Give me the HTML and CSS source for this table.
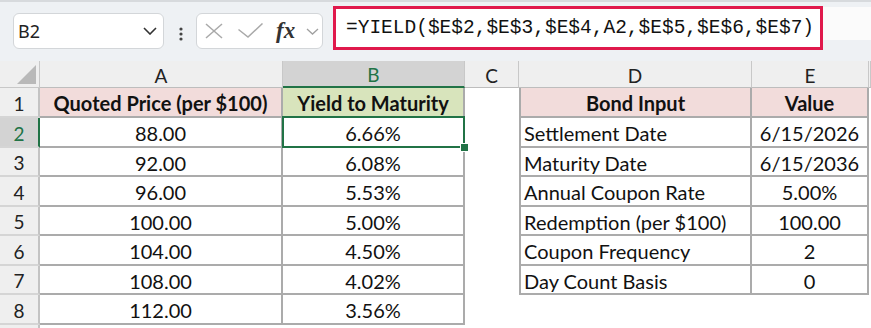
FILE: index.html
```html
<!DOCTYPE html>
<html>
<head>
<meta charset="utf-8">
<link rel="stylesheet" href="styles.css">
</head>
<body>
<div class="app">
  <div class="toolbar">
    <div class="namebox">
      <span class="nb-text">B2</span>
      <svg class="nb-chev" width="14" height="8" viewBox="0 0 14 8"><polyline points="1,1 7,7 13,1" fill="none" stroke="#333" stroke-width="1.6"/></svg>
    </div>
    <svg class="dots" width="4" height="14" viewBox="0 0 4 14"><circle cx="2" cy="2" r="1.6" fill="#444"/><circle cx="2" cy="7" r="1.6" fill="#444"/><circle cx="2" cy="12" r="1.6" fill="#444"/></svg>
    <div class="fnbox">
      <svg class="ic-x" width="18" height="16" viewBox="0 0 18 16"><line x1="1" y1="1" x2="17" y2="15" stroke="#a9a9a9" stroke-width="1.5"/><line x1="17" y1="1" x2="1" y2="15" stroke="#a9a9a9" stroke-width="1.5"/></svg>
      <svg class="ic-check" width="25" height="15" viewBox="0 0 25 15"><polyline points="0.5,6.5 10,14 24.5,0.5" fill="none" stroke="#a9a9a9" stroke-width="1.5"/></svg>
      <span class="fx">fx</span>
      <svg class="ic-chev" width="13" height="7" viewBox="0 0 13 7"><polyline points="1,1 6.5,6 12,1" fill="none" stroke="#a0a0a0" stroke-width="1.3"/></svg>
    </div>
    <div class="formula">=YIELD($E$2,$E$3,$E$4,A2,$E$5,$E$6,$E$7)</div>
    <div class="fbar-rest"></div>
  </div>

  <div class="sheet">
    <div class="corner"><svg width="19" height="19" viewBox="0 0 19 19"><polygon points="19,0 19,19 0,19" fill="#b9b9b9"/></svg></div>
    <div class="ch">A</div>
    <div class="ch sel">B</div>
    <div class="ch">C</div>
    <div class="ch">D</div>
    <div class="ch">E</div>
    <div class="ch"></div>

    <div class="rh">1</div>
    <div class="c t pink b">Quoted Price (per $100)</div>
    <div class="c t green b">Yield to Maturity</div>
    <div class="c"></div>
    <div class="c t tl pink b">Bond Input</div>
    <div class="c t pink b">Value</div>
    <div class="c"></div>

    <div class="rh sel">2</div>
    <div class="c t">88.00</div>
    <div class="c t active">6.66%<span class="handle"></span></div>
    <div class="c"></div>
    <div class="c t tl l">Settlement Date</div>
    <div class="c t">6/15/2026</div>
    <div class="c"></div>

    <div class="rh">3</div>
    <div class="c t">92.00</div>
    <div class="c t">6.08%</div>
    <div class="c"></div>
    <div class="c t tl l">Maturity Date</div>
    <div class="c t">6/15/2036</div>
    <div class="c"></div>

    <div class="rh">4</div>
    <div class="c t">96.00</div>
    <div class="c t">5.53%</div>
    <div class="c"></div>
    <div class="c t tl l">Annual Coupon Rate</div>
    <div class="c t">5.00%</div>
    <div class="c"></div>

    <div class="rh">5</div>
    <div class="c t">100.00</div>
    <div class="c t">5.00%</div>
    <div class="c"></div>
    <div class="c t tl l">Redemption (per $100)</div>
    <div class="c t">100.00</div>
    <div class="c"></div>

    <div class="rh">6</div>
    <div class="c t">104.00</div>
    <div class="c t">4.50%</div>
    <div class="c"></div>
    <div class="c t tl l">Coupon Frequency</div>
    <div class="c t">2</div>
    <div class="c"></div>

    <div class="rh">7</div>
    <div class="c t">108.00</div>
    <div class="c t">4.02%</div>
    <div class="c"></div>
    <div class="c t tl l">Day Count Basis</div>
    <div class="c t">0</div>
    <div class="c"></div>

    <div class="rh">8</div>
    <div class="c t">112.00</div>
    <div class="c t">3.56%</div>
    <div class="c"></div>
    <div class="c"></div>
    <div class="c"></div>
    <div class="c"></div>

    <div class="rh"></div>
    <div class="c"></div>
    <div class="c"></div>
    <div class="c"></div>
    <div class="c"></div>
    <div class="c"></div>
    <div class="c"></div>
  </div>
</div>
</body>
</html>
```

FILE: styles.css
```css
* { box-sizing: border-box; }
html, body { margin: 0; padding: 0; }
body {
  width: 871px;
  height: 328px;
  overflow: hidden;
  background: #ffffff;
  font-family: Lato, "Noto Sans", sans-serif;
}
.app { width: 871px; height: 328px; overflow: hidden; }

.toolbar {
  height: 61px;
  background: #eef1f4;
  border-top: 2px solid #d7dadd;
  display: flex;
  align-items: flex-start;
}
.namebox {
  margin: 11px 0 0 13px;
  width: 151px;
  height: 36px;
  background: #fff;
  border: 1px solid #d3d6d9;
  border-radius: 6px;
  display: flex;
  align-items: center;
  justify-content: space-between;
  padding: 0 6px 0 4px;
}
.nb-text {
  font-family: "Noto Sans", sans-serif;
  font-size: 18px;
  color: #222;
}
.dots { margin: 25px 0 0 15px; }
.fnbox {
  margin: 11px 0 0 13px;
  width: 127px;
  height: 36px;
  background: #fff;
  border: 1px solid #d3d6d9;
  border-radius: 6px;
  display: flex;
  align-items: center;
  padding-left: 8px;
}
.ic-x { margin-right: 15px; }
.ic-check { margin-right: 13px; margin-top: -1px; }
.fx {
  font-family: "Liberation Serif", serif;
  font-style: italic;
  font-weight: 700;
  font-size: 23px;
  color: #333;
  width: 22px;
  line-height: 1;
  margin-top: -2px;
}
.ic-chev { margin-left: 8px; }
.formula {
  margin: 4px 0 0 10px;
  width: 490px;
  height: 44px;
  border: 3px solid #e0194c;
  background: #fff;
  padding-left: 10px;
  display: flex;
  align-items: center;
  font-family: "Liberation Mono", monospace;
  font-size: 19.5px;
  color: #111;
  white-space: nowrap;
}
.fbar-rest {
  flex: 1;
  margin-top: 5px;
  height: 33px;
  background: #fbfbfb;
}

.sheet {
  display: grid;
  grid-template-columns: 40px 243px 182px 54px 233px 117px 1fr;
  grid-template-rows: 27px 30px 30px 29px 30px 29px 30px 29px 30px 20px;
  font-size: 20px;
  color: #111;
}
.corner {
  background: #efefef;
  border-right: 1px solid #c8c8c8;
  border-bottom: 1px solid #c8c8c8;
  display: flex;
  align-items: flex-end;
  justify-content: flex-end;
  padding: 0 3px 3px 0;
}
.ch {
  background: #efefef;
  border-right: 1px solid #c8c8c8;
  border-bottom: 1px solid #bdbdbd;
  display: flex;
  align-items: center;
  justify-content: center;
  padding-top: 2px;
  font-size: 19px;
  color: #222;
}
.ch.sel {
  background: #d3d3d3;
  color: #217346;
  border-bottom: 2px solid #217346;
}
.rh {
  background: #efefef;
  border-right: 2px solid #c3c3c3;
  border-bottom: 2px solid #d5d5d5;
  display: flex;
  align-items: center;
  justify-content: center;
  padding-top: 2px;
  font-size: 19px;
  color: #222;
}
.rh.sel {
  background: #d3d3d3;
  color: #217346;
  border-right: 2px solid #217346;
}
.c {
  background: #fff;
  display: flex;
  align-items: center;
  justify-content: center;
  padding-top: 2px;
  white-space: nowrap;
  position: relative;
}
.t {
  border-right: 2px solid #ababab;
  border-bottom: 2px solid #ababab;
}
.tl { border-left: 2px solid #ababab; }
.l { justify-content: flex-start; padding-left: 3px; }
.b { font-weight: 700; }
.pink { background: #f2dcdb; }
.green { background: #d8e4bc; }
.active { z-index: 3; }
.active::after {
  content: "";
  position: absolute;
  left: -1px;
  top: -2px;
  right: -2px;
  bottom: -2px;
  border: 2px solid #217346;
}
.handle {
  position: absolute;
  right: -6px;
  bottom: -6px;
  width: 9px;
  height: 9px;
  background: #217346;
  border: 1px solid #fff;
  z-index: 4;
}
```
